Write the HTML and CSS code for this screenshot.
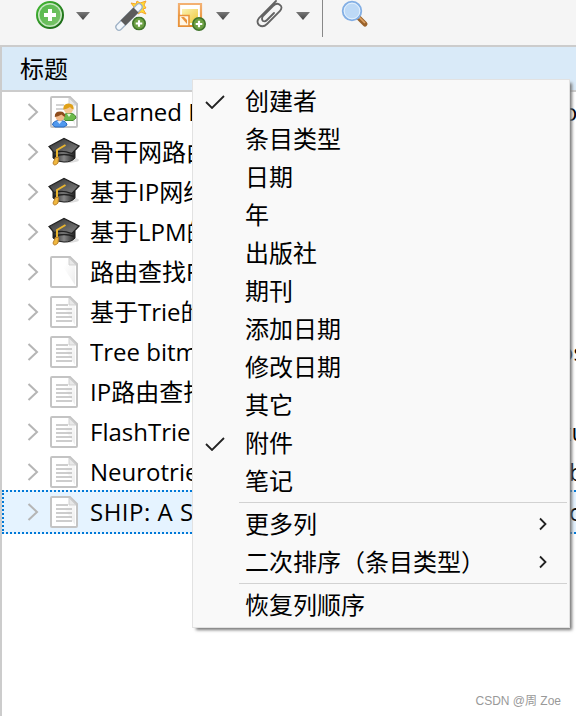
FILE: index.html
```html
<!DOCTYPE html>
<html lang="zh-CN">
<head>
<meta charset="utf-8">
<title>条目</title>
<link rel="stylesheet" href="styles.css">
</head>
<body>
<svg class="defs" aria-hidden="true">
  <defs>
    <linearGradient id="green" x1="0" y1="0" x2="1" y2="1"><stop offset="0" stop-color="#52b848"/><stop offset="1" stop-color="#7cc46c"/></linearGradient>
    <linearGradient id="rim" x1="0" y1="0" x2="1" y2="1"><stop offset="0" stop-color="#45bd35"/><stop offset="1" stop-color="#155f12"/></linearGradient>
    <linearGradient id="fold" x1="0" y1="0" x2="1" y2="1"><stop offset="0.3" stop-color="#fff"/><stop offset="1" stop-color="#ececec"/></linearGradient>
    <linearGradient id="cap" x1="0" y1="0" x2="1" y2="1"><stop offset="0" stop-color="#303030"/><stop offset="1" stop-color="#858585"/></linearGradient>
    <linearGradient id="capbase" x1="0" y1="0" x2="1" y2="0"><stop offset="0" stop-color="#222"/><stop offset=".5" stop-color="#888"/><stop offset="1" stop-color="#222"/></linearGradient>
    <linearGradient id="note" x1="0" y1="0" x2="1" y2="1"><stop offset="0" stop-color="#fbf2b4"/><stop offset="1" stop-color="#edc83a"/></linearGradient>
    <linearGradient id="frame" x1="0" y1="0" x2="0" y2="1"><stop offset="0" stop-color="#f3b173"/><stop offset="1" stop-color="#e78a27"/></linearGradient>
    <linearGradient id="tri" x1="0" y1="0" x2="0" y2="1"><stop offset="0" stop-color="#777"/><stop offset="1" stop-color="#444"/></linearGradient>
    <symbol id="page" viewBox="0 0 28 32">
      <path d="M2 1H20L27 8V30Q27 31 26 31H2Q1 31 1 30V2Q1 1 2 1Z" fill="#fff" stroke="#c4c4c4" stroke-width="2"/>
      <path d="M8 3H18V10H25V29Z" fill="url(#fold)"/>
      <path d="M19 2V9H26Z" fill="#e8e8e8" stroke="#d0d0d0"/>
    </symbol>
    <symbol id="doc" viewBox="0 0 28 32">
      <use href="#page"/>
      <path d="M6 9H18M6 13H22M6 17H22M6 21H22M6 25H22" stroke="#bdbdbd" stroke-width="1.7"/>
    </symbol>
    <symbol id="conf" viewBox="0 0 28 32">
      <use href="#page"/>
      <path d="M6 9H14M6 13H14M6 17H12" stroke="#c5c5c5" stroke-width="1.7"/>
      <path d="M12.500 22Q14 17 19 17Q25.500 17.500 26 22L23 24.500H15Z" fill="#6dbb4b" stroke="#478d31"/>
      <path d="M17 18 19 21 21 18Z" fill="#e6f8dc"/>
      <circle cx="18.500" cy="13" r="4.600" fill="#f5c795"/><path d="M13.300 13.500Q13 7.500 18.500 7.500Q24 7.500 23.700 13.500Q21 12.500 20 11Q17 13 13.300 13.500Z" fill="#dfa018"/>
      <path d="M2.500 29Q3 24.500 9.500 24.500Q16.500 24.500 17 29L14 31H5Z" fill="#4f98ee" stroke="#2868bd"/>
      <path d="M7 25 9.500 28 12 25Z" fill="#d9ecff"/>
      <circle cx="10" cy="20.500" r="4.500" fill="#f0b98a"/><path d="M4.800 21Q4.500 15.500 10 15.500Q15.500 15.500 15.200 21Q13 20 11.500 18.500Q8 20.500 4.800 21Z" fill="#8e4c1c"/>
    </symbol>
    <symbol id="thesis" viewBox="0 0 32 32">
      <ellipse cx="19" cy="23" rx="12" ry="3" fill="#ddd"/>
      <path d="M5 14V21Q9 25 16 25Q24 25 27 21V14Z" fill="url(#capbase)" stroke="#222"/>
      <path d="M6 19.500Q16 15.500 26 19.500" fill="none" stroke="#222" stroke-width="1.500"/>
      <path d="M1 9.500 16 1.500 31 9 24 16.500Q14 13 6 15.500Z" fill="url(#cap)" stroke="#222" stroke-width="1.300"/>
      <path d="M17.500 8 9 13V22" fill="none" stroke="#e9b52e" stroke-width="2"/>
      <path d="M7.500 20.500H10.500L10 26Q6 30 5 26Z" fill="#efb840" stroke="#bd812b"/>
    </symbol>
    <symbol id="badge" viewBox="0 0 14 14">
      <circle cx="7" cy="7" r="6.200" fill="#6c9f42" stroke="#40752b" stroke-width="1.600"/>
      <path d="M7 3.700V10.300M3.700 7H10.300" stroke="#fff" stroke-width="2.200"/>
    </symbol>
  </defs>
</svg>

<div class="window">
  <div class="toolbar">
    <svg class="tool-new" viewBox="0 0 28 28"><circle cx="14" cy="14" r="13" fill="#c5e6bf" stroke="url(#rim)" stroke-width="2"/><circle cx="14" cy="14" r="10.500" fill="url(#green)"/><path d="M14 8V20M8 14H20" stroke="#fff" stroke-width="4"/></svg>
    <svg class="drop drop-new" viewBox="0 0 14 8"><path d="M0 0H14L7 8Z" fill="url(#tri)"/></svg>
    <svg class="tool-wand" viewBox="0 0 34 32">
      <path d="M20 7 17 3 22 4 23 1 26 3 32 1 30 5 32 8 29 9 32 14 27 12 24 14Z" fill="#ffdc35" stroke="#f5a52b"/>
      <path d="M5 27 25 7" stroke="#9fb2c6" stroke-width="7.500" stroke-linecap="round"/>
      <path d="M5 27 25 7" stroke="#f2f7fc" stroke-width="5" stroke-linecap="round"/>
      <path d="M9 23 22 10" stroke="#5c5c5c" stroke-width="7"/>
      <use href="#badge" x="18" y="16.500" width="14" height="14"/>
    </svg>
    <svg class="tool-note" viewBox="0 0 30 30">
      <path d="M2 2H24V24H2Z" fill="#fff" stroke="url(#frame)" stroke-width="2.200"/>
      <path d="M5 7H21V21H5Z" fill="url(#note)"/>
      <path d="M2 13.500H12V24H2Z" fill="#fff6e5" stroke="#e9943d" stroke-width="1.600"/><path d="M4 15 10 22V18L7 15Z" fill="#e9943d"/>
      <use href="#badge" x="15" y="15" width="14" height="14"/>
    </svg>
    <svg class="drop drop-note" viewBox="0 0 14 8"><path d="M0 0H14L7 8Z" fill="url(#tri)"/></svg>
    <svg class="tool-clip" viewBox="0 0 28 28" fill="none" stroke="#636363" stroke-width="1.800" stroke-linecap="round"><path d="M20 1 3 18Q0 22 3 25Q7 28 11 24L24 11Q27 7 24 5Q21 2 17 6L7 16Q5 19 7 21Q9 22 11 20L18 13"/></svg>
    <svg class="drop drop-clip" viewBox="0 0 14 8"><path d="M0 0H14L7 8Z" fill="url(#tri)"/></svg>
    <span class="divider"></span>
    <svg class="tool-search" viewBox="0 0 28 28"><path d="M17 17 24 24" stroke="#9b632b" stroke-width="5" stroke-linecap="round"/><path d="M18 17 24 23" stroke="#dda265" stroke-width="1.700"/><circle cx="11" cy="11" r="9.300" fill="#bdd9f6" stroke="#82aee4" stroke-width="1.800"/><circle cx="11" cy="11" r="7.800" fill="none" stroke="#e2f0fd"/></svg>
  </div>
  <div class="table">
    <div class="header">标题</div>
    <div class="row"><svg class="twisty" viewBox="0 0 12 18"><path d="M1.500 1 10 9 1.500 17"/></svg><svg class="kind"><use href="#conf"/></svg><span class="title">Learned I</span><span class="creator early">o</span></div>
    <div class="row"><svg class="twisty" viewBox="0 0 12 18"><path d="M1.500 1 10 9 1.500 17"/></svg><svg class="kind wide"><use href="#thesis"/></svg><span class="title">骨干网路由</span></div>
    <div class="row"><svg class="twisty" viewBox="0 0 12 18"><path d="M1.500 1 10 9 1.500 17"/></svg><svg class="kind wide"><use href="#thesis"/></svg><span class="title">基于IP网络</span></div>
    <div class="row"><svg class="twisty" viewBox="0 0 12 18"><path d="M1.500 1 10 9 1.500 17"/></svg><svg class="kind wide"><use href="#thesis"/></svg><span class="title">基于LPM的</span></div>
    <div class="row"><svg class="twisty" viewBox="0 0 12 18"><path d="M1.500 1 10 9 1.500 17"/></svg><svg class="kind"><use href="#page"/></svg><span class="title">路由查找F</span></div>
    <div class="row"><svg class="twisty" viewBox="0 0 12 18"><path d="M1.500 1 10 9 1.500 17"/></svg><svg class="kind"><use href="#doc"/></svg><span class="title">基于Trie的</span></div>
    <div class="row"><svg class="twisty" viewBox="0 0 12 18"><path d="M1.500 1 10 9 1.500 17"/></svg><svg class="kind"><use href="#doc"/></svg><span class="title">Tree bitm</span><span class="creator earliest">os</span></div>
    <div class="row"><svg class="twisty" viewBox="0 0 12 18"><path d="M1.500 1 10 9 1.500 17"/></svg><svg class="kind"><use href="#doc"/></svg><span class="title">IP路由查找</span></div>
    <div class="row"><svg class="twisty" viewBox="0 0 12 18"><path d="M1.500 1 10 9 1.500 17"/></svg><svg class="kind"><use href="#doc"/></svg><span class="title">FlashTrie</span><span class="creator earliest">xu</span></div>
    <div class="row"><svg class="twisty" viewBox="0 0 12 18"><path d="M1.500 1 10 9 1.500 17"/></svg><svg class="kind"><use href="#doc"/></svg><span class="title">Neurotrie</span><span class="creator">b</span></div>
    <div class="row selected"><svg class="twisty" viewBox="0 0 12 18"><path d="M1.500 1 10 9 1.500 17"/></svg><svg class="kind"><use href="#doc"/></svg><span class="title spaced">SHIP: A S</span><span class="creator">o</span></div>
  </div>
  <div class="menu">
    <div class="item"><svg class="check" viewBox="0 0 20 14"><path d="M1 7 7 13 19 1"/></svg>创建者</div>
    <div class="item">条目类型</div>
    <div class="item">日期</div>
    <div class="item">年</div>
    <div class="item">出版社</div>
    <div class="item">期刊</div>
    <div class="item">添加日期</div>
    <div class="item">修改日期</div>
    <div class="item">其它</div>
    <div class="item"><svg class="check" viewBox="0 0 20 14"><path d="M1 7 7 13 19 1"/></svg>附件</div>
    <div class="item">笔记</div>
    <div class="separator"></div>
    <div class="item">更多列<svg class="more" viewBox="0 0 8 14"><path d="M1 1.500 6.500 7 1 12.500"/></svg></div>
    <div class="item">二次排序（条目类型）<svg class="more" viewBox="0 0 8 14"><path d="M1 1.500 6.500 7 1 12.500"/></svg></div>
    <div class="separator"></div>
    <div class="item">恢复列顺序</div>
  </div>
  <div class="watermark">CSDN @周 Zoe</div>
</div>
</body>
</html>
```
FILE: styles.css
```css
* { box-sizing: border-box; }
body { margin: 0; background: #fff; color: #000; }
svg { display: block; flex: none; }
.defs { position: absolute; width: 0; height: 0; }

.window {
  position: relative;
  display: flex;
  flex-direction: column;
  width: 576px;
  height: 716px;
  overflow: hidden;
  font: 24px/38px "Open Sans", "Noto Sans CJK SC", sans-serif;
}

.toolbar {
  display: flex;
  flex: none;
  height: 45px;
  padding-left: 36px;
  background: #f5f5f5;
}
.tool-new { width: 28px; height: 28px; margin-top: 1px; }
.drop { width: 14px; height: 8px; margin-top: 12px; }
.drop-new { margin-left: 12px; }
.tool-wand { width: 34px; height: 32px; margin-left: 24px; }
.tool-note { width: 30px; height: 30px; margin: 2px 0 0 29px; }
.drop-note { margin-left: 9px; }
.tool-clip { width: 28px; height: 28px; margin-left: 26px; }
.drop-clip { margin-left: 12px; }
.divider { width: 1px; height: 37px; margin-left: 12px; background: #888; }
.tool-search { width: 28px; height: 28px; margin-left: 18px; }

.table {
  display: flex;
  flex: 1;
  flex-direction: column;
  border-top: 2px solid #ccc;
  border-left: 2px solid #ccc;
}
.header {
  height: 45px;
  padding: 3px 0 0 18px;
  border-bottom: 2px solid #ccc;
  background: #d9eaf8;
}
.row {
  display: flex;
  flex: none;
  align-items: center;
  height: 40px;
  padding-left: 25px;
}
.selected {
  height: 44px;
  margin-top: -2px;
  padding-left: 23px;
  border: 2px dotted #0078d7;
  border-right: 0;
  background: #e5f3ff;
}
.twisty { width: 12px; height: 18px; margin-right: 11px; fill: none; stroke: #b5b5b5; stroke-width: 2; }
.kind { width: 28px; height: 32px; }
.wide { width: 32px; margin: 2px -2px 0; }
.title {
  flex: none;
  width: 102px;
  margin-left: 12px;
  overflow: hidden;
  white-space: nowrap;
}
.spaced { letter-spacing: 0.5px; }
.creator { margin-left: 377px; }
.early { margin-left: 371px; }
.earliest { margin-left: 367px; }

.menu {
  position: absolute;
  top: 79px;
  left: 192px;
  width: 378px;
  height: 549px;
  padding: 3px 0;
  border: 1px solid #e2e2e2;
  background: #f9f9f9;
  box-shadow: 3px 3px 3px -1px #777;
}
.item {
  position: relative;
  display: flex;
  align-items: center;
  height: 38px;
  padding: 0 22px 2px 52px;
}
.check { position: absolute; left: 12px; top: 12px; width: 20px; height: 14px; fill: none; stroke: #222; stroke-width: 1.8; }
.more { width: 8px; height: 14px; margin-left: auto; fill: none; stroke: #222; stroke-width: 1.8; }
.separator { height: 1px; margin: 1px 2px 3px 46px; background: #d2d2d2; }

.watermark {
  position: absolute;
  right: 15px;
  bottom: 7px;
  color: #999;
  font: 12px/16px "Liberation Sans", "Noto Sans CJK SC", sans-serif;
}
```
